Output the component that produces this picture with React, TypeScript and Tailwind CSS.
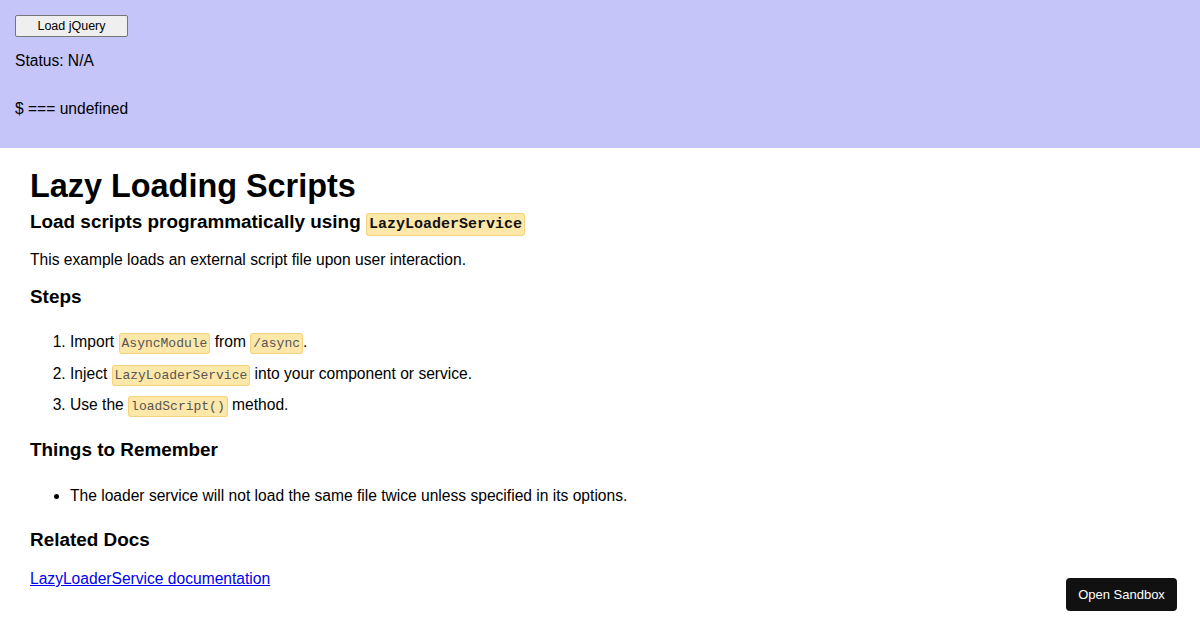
import React from "react"

// Demo page: lazy-loading a script on demand. Top band is the live example,
// below it the docs copy.

function Code({ children, big }: { children: React.ReactNode; big?: boolean }) {
  return big ? (
    <code className="rounded-[3px] border border-[#f5d27c] bg-[#fde8aa] px-[2px] py-[2px] font-['Liberation_Mono',monospace] text-[15px] font-bold leading-none text-[#111]">
      {children}
    </code>
  ) : (
    <code className="rounded-[3px] border border-[#f5d27c] bg-[#fde8aa] px-[2px] py-[2px] font-['Liberation_Mono',monospace] text-[13px] leading-none text-[#555]">
      {children}
    </code>
  )
}

export default function App() {
  return (
    <div className="min-h-[630px] bg-white font-['Liberation_Sans',Arial,sans-serif] text-black">
      <section className="flex h-[148px] flex-col items-start bg-[#c5c5fa] px-[15px] pt-[15px]">
        <button
          type="button"
          className="h-[22px] w-[113px] rounded-[2px] border border-[#767676] bg-[#efefef] text-[12.5px] leading-none text-black"
        >
          Load jQuery
        </button>
        <p className="mt-[15px] text-[15.6px] leading-[18px]">Status: N/A</p>
        <p className="mt-[30px] text-[15.6px] leading-[18px]">$ === undefined</p>
      </section>

      <main className="flex flex-col items-start px-[30px]">
        <h1 className="mt-[20px] text-[32.4px] font-bold leading-[37px]">Lazy Loading Scripts</h1>
        <h2 className="mt-[6px] text-[18.9px] font-bold leading-[21px]">
          Load scripts programmatically using <Code big>LazyLoaderService</Code>
        </h2>
        <p className="mt-[19px] text-[15.6px] leading-[18px]">
          This example loads an external script file upon user interaction.
        </p>

        <h3 className="mt-[17px] text-[18.9px] font-bold leading-[21px]">Steps</h3>
        <ol className="mt-[26px] flex list-decimal flex-col gap-[13.5px] pl-[40px] text-[15.6px] leading-[18px]">
          <li>
            Import <Code>AsyncModule</Code> from <Code>/async</Code>.
          </li>
          <li>
            Inject <Code>LazyLoaderService</Code> into your component or service.
          </li>
          <li>
            Use the <Code>loadScript()</Code> method.
          </li>
        </ol>

        <h3 className="mt-[25px] text-[18.9px] font-bold leading-[21px]">Things to Remember</h3>
        <ul className="mt-[27px] list-disc pl-[40px] text-[15.6px] leading-[18px]">
          <li>The loader service will not load the same file twice unless specified in its options.</li>
        </ul>

        <h3 className="mt-[24px] text-[18.9px] font-bold leading-[21px]">Related Docs</h3>
        <a href="#" className="mt-[20px] text-[15.6px] leading-[18px] text-[#0000ee] underline">
          LazyLoaderService documentation
        </a>
      </main>

      <button
        type="button"
        className="fixed bottom-[19px] right-[23px] h-[33px] w-[111px] rounded-[4px] bg-[#111111] text-[13px] text-white"
      >
        Open Sandbox
      </button>
    </div>
  )
}
